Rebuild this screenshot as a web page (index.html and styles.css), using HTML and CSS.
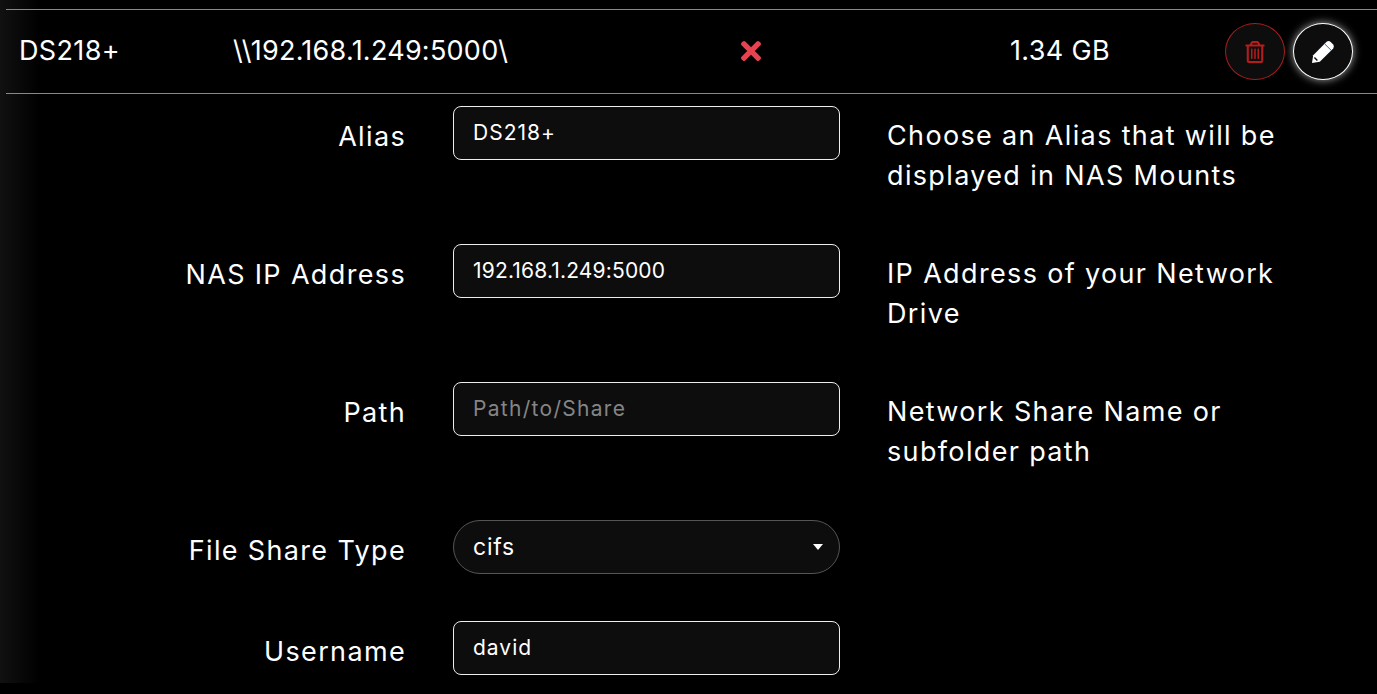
FILE: index.html
```html
<!DOCTYPE html>
<html lang="en">
<head>
<meta charset="utf-8">
<title>NAS Mounts</title>
<link rel="stylesheet" href="styles.css">
</head>
<body>
<main class="page">
  <section class="mount-row">
    <span class="cell-name">DS218+</span>
    <span class="cell-path">\\192.168.1.249:5000\</span>
    <span class="cell-status">
      <svg class="icon-x" viewBox="0 80 352 352" aria-hidden="true"><path d="M242.72 256l100.07-100.07c12.28-12.28 12.28-32.19 0-44.48l-22.24-22.24c-12.28-12.28-32.19-12.28-44.48 0L176 189.28 75.93 89.21c-12.28-12.28-32.19-12.28-44.48 0L9.21 111.45c-12.28 12.28-12.28 32.19 0 44.48L109.28 256 9.21 356.07c-12.28 12.28-12.28 32.19 0 44.48l22.24 22.24c12.28 12.28 32.2 12.28 44.48 0L176 322.72l100.07 100.07c12.28 12.28 32.2 12.28 44.48 0l22.24-22.24c12.28-12.28 12.28-32.19 0-44.48L242.72 256z"/></svg>
    </span>
    <span class="cell-size">1.34 GB</span>
    <span class="cell-actions">
      <button class="round-btn round-btn-danger" type="button" aria-label="Delete">
        <svg class="icon-trash" viewBox="0 0 448 512" aria-hidden="true"><path d="M432 80h-82.41l-34-56.7A48 48 0 0 0 274.41 0H173.59a48 48 0 0 0-41.16 23.3L98.41 80H16A16 16 0 0 0 0 96v16a16 16 0 0 0 16 16h16v336a48 48 0 0 0 48 48h288a48 48 0 0 0 48-48V128h16a16 16 0 0 0 16-16V96a16 16 0 0 0-16-16zM171.84 50.91A6 6 0 0 1 177 48h94a6 6 0 0 1 5.15 2.91L293.61 80H154.39zM368 464H80V128h288z"/><rect x="130" y="176" width="36" height="240" rx="10"/><rect x="206" y="176" width="36" height="240" rx="10"/><rect x="282" y="176" width="36" height="240" rx="10"/></svg>
      </button>
      <button class="round-btn round-btn-edit" type="button" aria-label="Edit">
        <svg class="icon-pencil" viewBox="0 0 22 22" aria-hidden="true">
          <path class="pencil-body" d="M0 22 L1.2 14.2 L14.6 0.8 Q16.6 -0.6 18.4 0.8 L21.2 3.6 Q22.6 5.4 21.2 7.4 L7.8 20.8 Z"/>
          <path class="pencil-band" d="M12.8 3 L19 9.2"/>
          <path class="pencil-tip" d="M2.4 16.6 L5.4 19.6"/>
        </svg>
      </button>
    </span>
  </section>

  <form class="mount-form">
    <div class="field field-tall">
      <label class="field-label" for="alias">Alias</label>
      <input class="text-input" id="alias" type="text" value="DS218+">
      <p class="field-help">Choose an Alias that will be displayed in NAS Mounts</p>
    </div>
    <div class="field field-tall">
      <label class="field-label" for="ip">NAS IP Address</label>
      <input class="text-input text-input-numeric" id="ip" type="text" value="192.168.1.249:5000">
      <p class="field-help">IP Address of your Network Drive</p>
    </div>
    <div class="field field-tall">
      <label class="field-label" for="path">Path</label>
      <input class="text-input" id="path" type="text" placeholder="Path/to/Share">
      <p class="field-help">Network Share Name or subfolder path</p>
    </div>
    <div class="field field-short">
      <label class="field-label" for="type">File Share Type</label>
      <div class="select-wrap">
        <select class="select-input" id="type"><option>cifs</option></select>
      </div>
    </div>
    <div class="field">
      <label class="field-label" for="user">Username</label>
      <input class="text-input" id="user" type="text" value="david">
    </div>
  </form>
</main>
</body>
</html>
```
FILE: styles.css
```css
* { box-sizing: border-box; }

html, body {
  margin: 0;
  height: 100%;
  overflow: hidden;
  background: #000;
}

body {
  color: #fff;
  font-family: Inter, "Noto Sans", sans-serif;
  font-size: 27px;
}

.page {
  height: 683px;
  padding: 9px 0 0 6px;
  background: linear-gradient(90deg, #111 0, #000 40px);
}

.mount-row {
  display: grid;
  grid-template-columns: 214px 277px 482px 136px 1fr;
  align-items: center;
  height: 85px;
  padding: 0 24px 0 13px;
  letter-spacing: 0.35px;
  border-top: 1px solid #888;
  border-bottom: 1px solid #888;
}

.cell-name,
.cell-path,
.cell-size { margin-top: -3px; }

.cell-path { letter-spacing: 0.25px; }

.cell-status { display: flex; justify-content: center; margin-top: -2px; }
.cell-size { text-align: center; }

.icon-x { width: 20px; height: 20px; fill: #e5434f; }

.cell-actions { display: flex; justify-content: flex-end; gap: 8px; }

.round-btn {
  display: flex;
  align-items: center;
  justify-content: center;
  width: 60px;
  height: 57px;
  padding: 0;
  background: #0d0d0d;
  border-radius: 50%;
  border: 1px solid #a91c1c;
}

.round-btn-edit {
  border: 1px solid #fff;
  box-shadow: 0 0 8px rgba(255, 255, 255, 0.65);
}

.icon-trash { width: 20px; height: 22px; fill: #b71c1c; }
.icon-pencil { width: 22px; height: 22px; overflow: visible; }

.pencil-body { fill: #fff; }
.pencil-band { fill: none; stroke: #2a6fb8; stroke-width: 1; }
.pencil-tip { fill: none; stroke: #0d0d0d; stroke-width: 1.4; }

.mount-form { padding-top: 12px; }

.field {
  display: grid;
  grid-template-columns: 400px 387px 1fr;
  column-gap: 47px;
  align-items: start;
  letter-spacing: 1.35px;
}

.field-tall { height: 138px; }
.field-short { height: 101px; }

.field-label {
  margin-top: 11px;
  line-height: 40px;
  text-align: right;
}

.field-help {
  margin: 10px 0 0;
  line-height: 40px;
  max-width: 400px;
}

.text-input,
.select-input {
  width: 387px;
  height: 54px;
  padding: 0 19px;
  background: #0d0d0d;
  color: #fff;
  font-family: inherit;
  outline: none;
}

.text-input {
  padding-bottom: 2px;
  border: 1px solid #eee;
  border-radius: 8px;
  font-size: 21px;
  letter-spacing: 1px;
}

.text-input-numeric { letter-spacing: 0.17px; }

.text-input::placeholder { color: #858585; opacity: 1; letter-spacing: 1.3px; }

.select-wrap { position: relative; width: 387px; }

.select-wrap::after {
  content: "";
  position: absolute;
  top: 24px;
  right: 17px;
  border-top: 6px solid #fff;
  border-left: 5.5px solid transparent;
  border-right: 5.5px solid transparent;
}

.select-input {
  appearance: none;
  border: 1px solid #555;
  border-radius: 27px;
  font-size: 23px;
  letter-spacing: 0.8px;
}
```
